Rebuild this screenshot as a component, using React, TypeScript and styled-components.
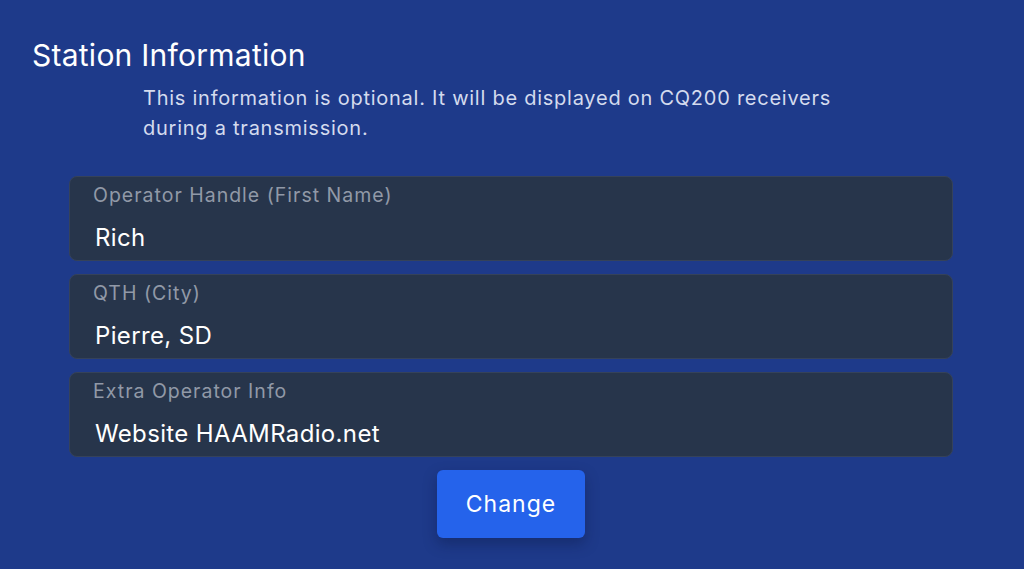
import React from "react";
import styled, { createGlobalStyle } from "styled-components";

const Global = createGlobalStyle`
  html, body { margin: 0; padding: 0; background: #1e3a8a; }
  body { font-family: Inter, "Noto Sans", sans-serif; -webkit-font-smoothing: antialiased; }
  * { box-sizing: border-box; }
`;

const Page = styled.div`
  width: 1024px;
  height: 569px;
  background: #1e3a8a;
  padding: 37px 0 0;
  display: flex;
  flex-direction: column;
  overflow: hidden;
`;

const Title = styled.h1`
  margin: 0 0 0 32px;
  font-size: 30px;
  line-height: 36px;
  font-weight: 400;
  letter-spacing: 0.25px;
  color: #ffffff;
`;

const Description = styled.p`
  margin: 10px auto 0;
  width: 738px;
  font-size: 20px;
  line-height: 30px;
  letter-spacing: 0.75px;
  color: #d4dbee;
`;

const Content = styled.div`
  margin: 33px 0 0 69px;
  width: 884px;
  display: flex;
  flex-direction: column;
`;

const Form = styled.div`
  display: flex;
  flex-direction: column;
  gap: 13px;
`;

const Field = styled.div`
  height: 85px;
  background: #27354b;
  border: 1px solid #35425a;
  border-radius: 8px;
  padding: 6px 23px 0;
  display: flex;
  flex-direction: column;
`;

const Label = styled.span`
  font-size: 19.5px;
  line-height: 24px;
  letter-spacing: 1px;
  color: #9199a7;
`;

const Value = styled.span`
  margin-top: 16px;
  padding-left: 2px;
  font-size: 24px;
  line-height: 30px;
  letter-spacing: 0.35px;
  color: #ffffff;
`;

const Actions = styled.div`
  display: flex;
  justify-content: center;
  margin-top: 13px;
`;

const Button = styled.button`
  width: 148px;
  height: 68px;
  border: none;
  border-radius: 6px;
  background: #2563eb;
  color: #ffffff;
  font-family: inherit;
  font-size: 23px;
  letter-spacing: 1px;
  box-shadow: 0 6px 14px rgba(10, 20, 60, 0.35);
  cursor: pointer;
`;

const fields = [
  { label: "Operator Handle (First Name)", value: "Rich" },
  { label: "QTH (City)", value: "Pierre, SD" },
  { label: "Extra Operator Info", value: "Website HAAMRadio.net" },
];

export default function App() {
  return (
    <>
      <Global />
      <Page>
        <Title>Station Information</Title>
        <Description>
          This information is optional. It will be displayed on CQ200 receivers during a transmission.
        </Description>
        <Content>
          <Form>
            {fields.map((f) => (
              <Field key={f.label}>
                <Label>{f.label}</Label>
                <Value>{f.value}</Value>
              </Field>
            ))}
          </Form>
          <Actions>
            <Button>Change</Button>
          </Actions>
        </Content>
      </Page>
    </>
  );
}
